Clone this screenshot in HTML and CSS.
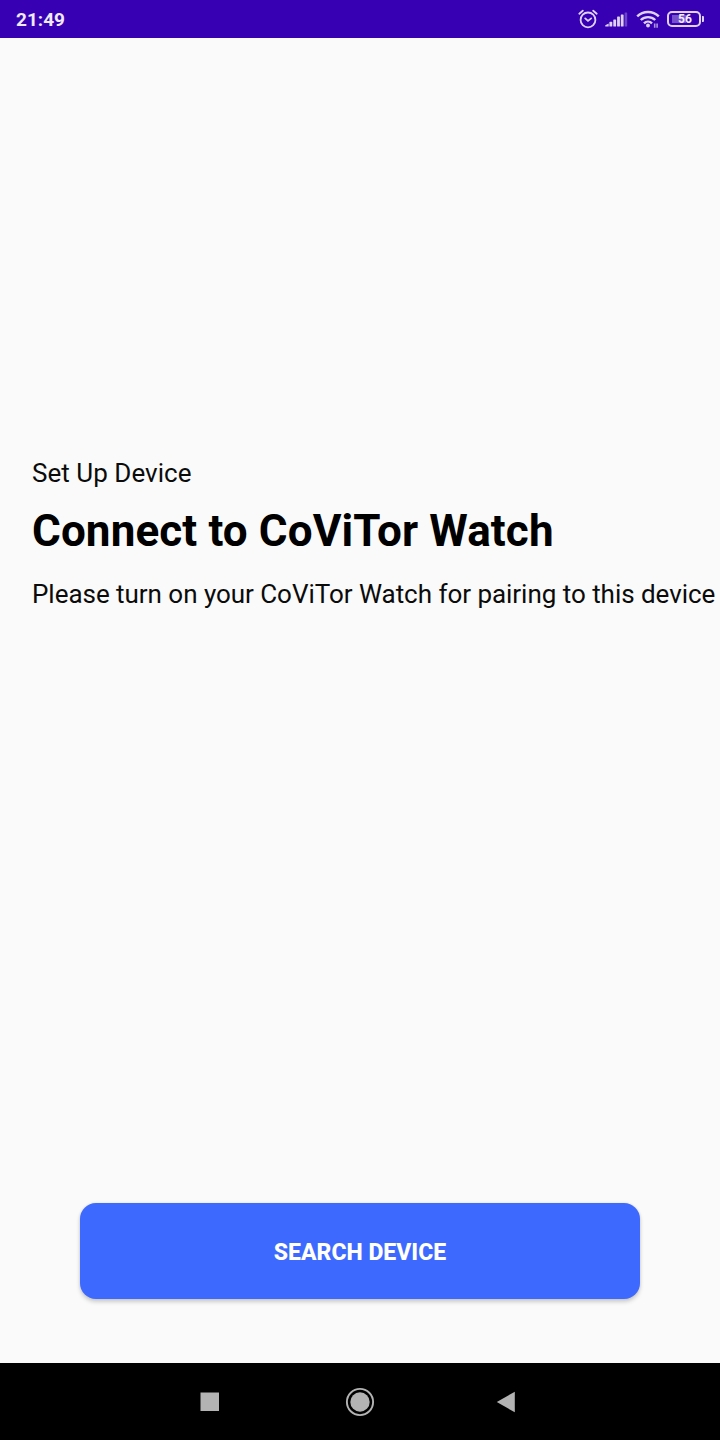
FILE: index.html
```html
<!DOCTYPE html>
<html lang="en">
<head>
<meta charset="utf-8">
<title>Set Up Device</title>
<link rel="stylesheet" href="styles.css">
</head>
<body>
<div class="screen">
  <header class="status">
    <span class="clock">21:49</span>
    <div class="indicators">
      <svg class="alarm" width="20" height="20" viewBox="0 0 20 20" fill="none" stroke="currentColor" stroke-width="1.8" stroke-linecap="round">
        <circle cx="10" cy="10.9" r="7.4"/>
        <path d="M1.3 4.7 4.8 1.7M18.7 4.7 15.2 1.7M7.2 9.4 10 11.9 13.2 9.4"/>
      </svg>
      <svg class="signal" width="24" height="15" viewBox="0 0 24 15" fill="currentColor">
        <path d="M.3 14.6V13.2L3.7 11.4V14.6z"/>
        <rect x="4.4" y="9.8" width="2.9" height="4.8" rx=".6"/>
        <rect x="8.3" y="7.4" width="2.8" height="7.2" rx=".6"/>
        <rect x="12.1" y="4.6" width="2.8" height="10" rx=".6"/>
        <rect x="15.8" y="2.4" width="2.8" height="12.2" rx=".6"/>
        <rect x="19.6" y=".4" width="2.6" height="14.2" rx=".6" opacity=".32"/>
      </svg>
      <svg class="wifi" width="24" height="18" viewBox="0 0 24 18" fill="none" stroke="currentColor" stroke-width="2.4">
        <path d="M1.2 6.4C7.1 .5 16.9 .5 22.8 6.4M4.8 10C8.8 6.1 15.2 6.1 19.2 10M8 13.3C10.3 11 13.7 11 16 13.3"/>
        <circle cx="12" cy="15.5" r="1.9" fill="currentColor" stroke="none"/>
        <path d="M18.7 13.6V17.7M21.1 13.6V17.7" stroke-width="1.6" opacity=".7"/>
      </svg>
      <div class="battery"><span class="level">56</span></div>
    </div>
  </header>
  <main class="content">
    <section class="intro">
      <p class="text">Set Up Device</p>
      <h1 class="title">Connect to CoViTor Watch</h1>
      <p class="text detail">Please turn on your CoViTor Watch for pairing to this device</p>
    </section>
    <button class="search" type="button">SEARCH DEVICE</button>
  </main>
  <nav class="nav">
    <svg width="20" height="20" viewBox="0 0 20 20"><path d="M.5.5h18.5v18.5H.5z" fill="currentColor"/></svg>
    <svg width="30" height="30" viewBox="0 0 30 30"><circle cx="15" cy="15" r="13.1" fill="none" stroke="currentColor" stroke-width="1.9"/><circle cx="15" cy="15" r="9.7" fill="currentColor"/></svg>
    <svg width="20" height="22" viewBox="0 0 20 22"><path d="M.8 11 18.8 .7v20.6z" fill="currentColor"/></svg>
  </nav>
</div>
</body>
</html>
```
FILE: styles.css
```css
* { box-sizing: border-box; }
body { margin: 0; font-family: Roboto, "Liberation Sans", sans-serif; }
.screen {
  display: flex;
  flex-direction: column;
  width: 720px;
  height: 1440px;
  overflow: hidden;
  background: #fafafa;
}
.status {
  display: flex;
  align-items: center;
  justify-content: space-between;
  height: 38px;
  padding: 0 14px 0 16px;
  background: #3700b3;
  color: #dfd2f6;
}
.clock { padding-top: 1px; font-size: 19px; font-weight: 700; line-height: 38px; color: #f0e8fb; }
.indicators { display: flex; align-items: center; }
.signal { margin-left: 7px; }
.wifi { margin-left: 7px; }
.battery {
  position: relative;
  width: 34px;
  height: 16px;
  margin: 0 5px 0 7px;
  padding: 2px 0;
  border: 2px solid #dfd2f6;
  border-radius: 5px;
  background: linear-gradient(90deg, transparent 3px, #7650cc 3px, #7650cc 17px, transparent 17px) content-box;
}
.battery::after {
  content: "";
  position: absolute;
  right: -5px;
  top: 3px;
  width: 2px;
  height: 6px;
  border-radius: 0 1px 1px 0;
  background: #dfd2f6;
}
.level {
  display: block;
  margin-top: -2px;
  padding-left: 2px;
  font-size: 12px;
  font-weight: 700;
  line-height: 12px;
  text-align: center;
  color: #f3ecfc;
}
.content { flex: 1; padding: 418px 0 0 32px; }
.intro { height: 747px; white-space: nowrap; }
.text { margin: 0; font-size: 26px; line-height: 34px; letter-spacing: .03px; color: #0b0b0b; }
.detail { letter-spacing: -.035px; }
.title { margin: 10px 0 15px; font-size: 44px; line-height: 62px; font-weight: 700; letter-spacing: .12px; color: #000; }
.search {
  display: block;
  width: 560px;
  height: 96px;
  margin-left: 48px;
  padding: 2px 0 0;
  border: 0;
  border-radius: 16px;
  background: #3d69ff;
  box-shadow: 0 3px 4px rgba(0, 0, 0, .18), 0 0 3px rgba(0, 0, 0, .1);
  color: #fff;
  font: 800 23px/96px Roboto, "Liberation Sans", sans-serif;
}
.nav {
  display: flex;
  align-items: center;
  justify-content: space-between;
  height: 77px;
  padding: 0 204px 0 200px;
  background: #000;
  color: #b3b3b3;
}
.nav svg:nth-child(2) { margin-left: 3px; }
```
